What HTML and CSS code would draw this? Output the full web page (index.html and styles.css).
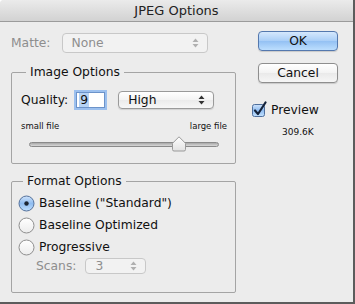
FILE: index.html
```html
<!DOCTYPE html>
<html lang="en">
<head>
    <meta charset="UTF-8">
    <title>JPEG Options</title>
    <link rel="stylesheet" href="styles.css">
</head>
<body>
<div class="window">
    <div class="titlebar">JPEG Options</div>
    <div class="content">
        <div class="left">
            <div class="matte-row">
                <span class="label disabled">Matte:</span>
                <div class="popup popup-matte is-disabled">
                    <span>None</span>
                    <svg class="arrows" width="7" height="10" viewBox="0 0 7 10"><path d="M3.5 0.5 L6.5 4 H0.5 Z M3.5 9.5 L6.5 6 H0.5 Z" fill="#b0b0b0"/></svg>
                </div>
            </div>

            <fieldset class="group group-image">
                <legend>Image Options</legend>
                <div class="quality-row">
                    <span class="label">Quality:</span>
                    <span class="field"><span class="sel">9</span></span>
                    <div class="popup popup-high">
                        <span>High</span>
                        <svg class="arrows" width="7" height="10" viewBox="0 0 7 10"><path d="M3.5 0.5 L6.5 4 H0.5 Z M3.5 9.5 L6.5 6 H0.5 Z" fill="#333"/></svg>
                    </div>
                </div>
                <div class="slider-labels">
                    <span>small file</span>
                    <span>large file</span>
                </div>
                <div class="slider">
                    <div class="track"></div>
                    <svg class="thumb" style="left: 79%" width="15" height="16" viewBox="0 0 15 16">
                        <defs>
                            <linearGradient id="tg" x1="0" y1="0" x2="0" y2="1">
                                <stop offset="0" stop-color="#ffffff"/>
                                <stop offset="1" stop-color="#e2e2e2"/>
                            </linearGradient>
                        </defs>
                        <path d="M7.5 0.8 L14 7.3 V13.5 Q14 15 12.5 15 H2.5 Q1 15 1 13.5 V7.3 Z" fill="url(#tg)" stroke="#9a9a9a" stroke-width="1"/>
                    </svg>
                </div>
            </fieldset>

            <fieldset class="group group-format">
                <legend>Format Options</legend>
                <label class="radio-row">
                    <svg class="radio" width="17" height="17" viewBox="0 0 17 17">
                        <defs>
                            <linearGradient id="rb" x1="0" y1="0" x2="0" y2="1">
                                <stop offset="0" stop-color="#cfe3fb"/>
                                <stop offset="0.5" stop-color="#8fbcf0"/>
                                <stop offset="1" stop-color="#bfe0ff"/>
                            </linearGradient>
                        </defs>
                        <circle cx="8.5" cy="8.5" r="7.5" fill="url(#rb)" stroke="#56729b"/>
                        <circle cx="8.5" cy="8.5" r="2.2" fill="#1b2533"/>
                    </svg>
                    <span>Baseline (&quot;Standard&quot;)</span>
                </label>
                <label class="radio-row">
                    <svg class="radio" width="17" height="17" viewBox="0 0 17 17">
                        <defs>
                            <linearGradient id="rw" x1="0" y1="0" x2="0" y2="1">
                                <stop offset="0" stop-color="#ffffff"/>
                                <stop offset="1" stop-color="#ececec"/>
                            </linearGradient>
                        </defs>
                        <circle cx="8.5" cy="8.5" r="7.5" fill="url(#rw)" stroke="#8e8e8e"/>
                    </svg>
                    <span>Baseline Optimized</span>
                </label>
                <label class="radio-row">
                    <svg class="radio" width="17" height="17" viewBox="0 0 17 17">
                        <circle cx="8.5" cy="8.5" r="7.5" fill="url(#rw)" stroke="#8e8e8e"/>
                    </svg>
                    <span>Progressive</span>
                </label>
                <div class="scans-row">
                    <span class="label disabled">Scans:</span>
                    <div class="popup popup-scans is-disabled">
                        <span>3</span>
                        <svg class="arrows" width="7" height="10" viewBox="0 0 7 10"><path d="M3.5 0.5 L6.5 4 H0.5 Z M3.5 9.5 L6.5 6 H0.5 Z" fill="#b0b0b0"/></svg>
                    </div>
                </div>
            </fieldset>
        </div>

        <div class="right">
            <button class="btn btn-default">OK</button>
            <button class="btn">Cancel</button>
            <label class="check-row">
                <svg class="check" width="16" height="17" viewBox="0 0 16 17">
                    <defs>
                        <linearGradient id="cb" x1="0" y1="0" x2="0" y2="1">
                            <stop offset="0" stop-color="#cfe3fb"/>
                            <stop offset="0.5" stop-color="#8fbcf0"/>
                            <stop offset="1" stop-color="#c4e2ff"/>
                        </linearGradient>
                    </defs>
                    <rect x="0.5" y="3.5" width="12" height="12" rx="2" fill="url(#cb)" stroke="#4f6f9c"/>
                    <path d="M3 9.5 L6 13 L13.5 1.5" fill="none" stroke="#15233a" stroke-width="2.2" stroke-linecap="round" stroke-linejoin="round"/>
                </svg>
                <span>Preview</span>
            </label>
            <div class="filesize">309.6K</div>
        </div>
    </div>
</div>
</body>
</html>
```

FILE: styles.css
```css
html, body {
    margin: 0;
    padding: 0;
    background: #ffffff;
}
body {
    font-family: "DejaVu Sans", sans-serif;
    font-size: 12.3px;
    color: #111;
}
.window {
    width: 355px;
    height: 304px;
    box-sizing: border-box;
    background: #ececec;
    border-right: 2px solid #5c5c5c;
    border-bottom: 2px solid #5c5c5c;
    border-top-left-radius: 4px;
    overflow: hidden;
}
.titlebar {
    height: 21px;
    line-height: 22px;
    font-size: 13px;
    text-align: center;
    color: #222;
    background: linear-gradient(#ebebeb, #d2d2d2);
    border-bottom: 1px solid #9b9b9b;
}
.content {
    display: flex;
    padding: 9px 0 0 11px;
}
.left {
    width: 225px;
}
.right {
    display: flex;
    flex-direction: column;
    align-items: flex-start;
    margin-left: 22px;
}
.label {
    color: #111;
}
.disabled {
    color: #8e8e8e;
}

/* popups */
.popup {
    box-sizing: border-box;
    display: flex;
    align-items: center;
    justify-content: space-between;
    border: 1px solid #9a9a9a;
    border-radius: 4px;
    background: linear-gradient(#ffffff, #f3f3f3 50%, #ebebeb 50%, #f7f7f7);
    box-shadow: 0 1px 1px rgba(0, 0, 0, 0.12);
    padding: 0 8px 0 9px;
}
.popup.is-disabled {
    color: #8e8e8e;
    border-color: #c8c8c8;
    background: #f2f2f2;
    box-shadow: none;
}
.popup .arrows {
    display: block;
}
.matte-row {
    display: flex;
    align-items: center;
    height: 20px;
    margin-top: 2px;
}
.popup-matte {
    width: 146px;
    height: 20px;
    margin-left: 11px;
}

/* group boxes */
.group {
    margin: 0;
    border: 1px solid #a4a4a4;
    border-radius: 2px;
    width: 225px;
    box-sizing: border-box;
}
.group legend {
    padding: 0 4px;
    margin-left: 5px;
    line-height: 16px;
}
.group-image {
    margin-top: 11px;
    height: 100px;
    padding: 11px 8px 0 9px;
}
.quality-row {
    display: flex;
    align-items: center;
    height: 17px;
}
.field {
    box-sizing: border-box;
    width: 29px;
    height: 16px;
    margin-left: 8px;
    background: #fff;
    border: 1px solid #6c93c9;
    box-shadow: 0 0 0 2px #9cc0ee;
    line-height: 14px;
    padding-left: 2px;
}
.field .sel {
    background: #b5d3f5;
    padding: 0 1px;
}
.popup-high {
    width: 96px;
    height: 18px;
    margin-left: 13px;
}
.slider-labels {
    display: flex;
    justify-content: space-between;
    font-size: 8.5px;
    line-height: 12px;
    margin-top: 12px;
}
.slider {
    position: relative;
    height: 16px;
    margin: 4px 8px 0 8px;
}
.track {
    position: relative;
    top: 6px;
    height: 3px;
    border: 1px solid #8a8a8a;
    border-radius: 3px;
    background: linear-gradient(#a8a8a8, #d8d8d8);
}
.thumb {
    position: absolute;
    top: 0;
    transform: translateX(-50%);
}

.group-format {
    margin-top: 9px;
    height: 120px;
    padding: 3px 8px 0 6px;
}
.radio-row {
    display: flex;
    align-items: center;
    height: 22px;
}
.radio {
    display: block;
    margin-right: 4px;
}
.scans-row {
    display: flex;
    align-items: center;
    height: 16px;
    margin-left: 18px;
}
.popup-scans {
    width: 61px;
    height: 16px;
    margin-left: 9px;
}

/* buttons */
.btn {
    font-family: inherit;
    font-size: 12.3px;
    width: 80px;
    height: 20px;
    padding: 0;
    color: #111;
    border: 1px solid #8e8e8e;
    border-radius: 4px;
    background: linear-gradient(#ffffff, #f3f3f3 50%, #e9e9e9 50%, #f6f6f6);
    box-shadow: 0 1px 1px rgba(0, 0, 0, 0.15);
    margin-bottom: 12px;
}
.btn-default {
    border-color: #5478ae;
    background: linear-gradient(#d5e8fd, #a9cef7 50%, #93c0f3 50%, #bcdefe);
}
.check-row {
    display: flex;
    align-items: center;
    margin: 6px 0 0 -6px;
    height: 17px;
}
.check {
    display: block;
    margin-right: 3px;
}
.filesize {
    font-size: 9px;
    margin: 9px 0 0 24px;
}
```
